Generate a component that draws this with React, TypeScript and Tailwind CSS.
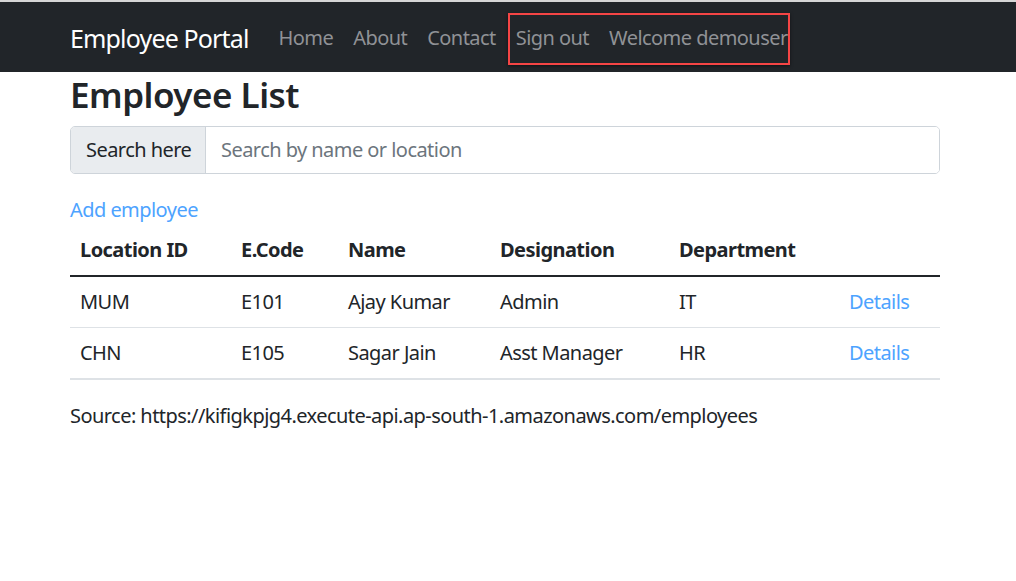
import React from "react";

const rows = [
  { loc: "MUM", code: "E101", name: "Ajay Kumar", des: "Admin", dept: "IT" },
  { loc: "CHN", code: "E105", name: "Sagar Jain", des: "Asst Manager", dept: "HR" },
];

export default function App() {
  return (
    <div
      className="min-h-[581px] w-[1016px] bg-white text-[#212529] tracking-[-0.55px]"
      style={{ fontFamily: '"Noto Sans", "Open Sans", Arial, sans-serif' }}
    >
      <div className="h-[2px] bg-[#d6d6d6]" />
      <nav className="relative h-[70px] bg-[#212529] flex items-center pl-[70px]">
        <span className="text-[25px] text-white mr-[20px] leading-none tracking-[-0.85px] pt-[2px]">Employee Portal</span>
        <div className="flex items-center text-[20px] text-[#909296] pt-[2px]">
          <span className="px-[10px]">Home</span>
          <span className="px-[10px]">About</span>
          <span className="px-[10px]">Contact</span>
          <span className="px-[10px]">Sign out</span>
          <span className="px-[10px]">Welcome demouser</span>
        </div>
        <div className="absolute left-[508px] top-[11px] w-[282px] h-[52px] border-2 border-[#f54545] shadow-[0_1px_3px_rgba(0,0,0,0.5)]" />
      </nav>
      <main className="w-[870px] ml-[70px]">
        <h3 className="mt-[2px] text-[35px] font-semibold leading-[42px] tracking-[-0.5px]">Employee List</h3>
        <div className="mt-[10px] flex h-[48px] rounded-[5px] border border-[#ced4da] overflow-hidden">
          <div className="w-[135px] shrink-0 bg-[#e9ecef] border-r border-[#ced4da] flex items-center pl-[15px] text-[20px] text-[#212529]">
            Search here
          </div>
          <input
            className="flex-1 px-[15px] text-[20px] outline-none placeholder:text-[#6c757d] bg-white tracking-[-0.55px]"
            placeholder="Search by name or location"
          />
        </div>
        <div className="mt-[21px] h-[30px] leading-[30px] text-[20px] text-[#4da3ff]">Add employee</div>
        <table className="w-full border-collapse text-[20px] leading-[30px] table-fixed">
          <colgroup>
            <col className="w-[161px]" />
            <col className="w-[107px]" />
            <col className="w-[152px]" />
            <col className="w-[179px]" />
            <col className="w-[170px]" />
            <col />
          </colgroup>
          <thead>
            <tr className="border-b-2 border-[#212529]">
              <th className="text-left font-bold px-[10px] py-[10px]">Location ID</th>
              <th className="text-left font-bold px-[10px] py-[10px]">E.Code</th>
              <th className="text-left font-bold px-[10px] py-[10px]">Name</th>
              <th className="text-left font-bold px-[10px] py-[10px]">Designation</th>
              <th className="text-left font-bold px-[10px] py-[10px]">Department</th>
              <th className="px-[10px] py-[10px]" />
            </tr>
          </thead>
          <tbody>
            {rows.map((r, i) => (
              <tr
                key={r.code}
                className={i === rows.length - 1 ? "border-b-2 border-[#dee2e6]" : "border-b border-[#dee2e6]"}
              >
                <td className="px-[10px] py-[10px]">{r.loc}</td>
                <td className="px-[10px] py-[10px]">{r.code}</td>
                <td className="px-[10px] py-[10px]">{r.name}</td>
                <td className="px-[10px] py-[10px]">{r.des}</td>
                <td className="px-[10px] py-[10px]">{r.dept}</td>
                <td className="px-[10px] py-[10px] text-[#4da3ff]">Details</td>
              </tr>
            ))}
          </tbody>
        </table>
        <p className="mt-[21px] text-[20px] leading-[30px]">
          Source: https://kifigkpjg4.execute-api.ap-south-1.amazonaws.com/employees
        </p>
      </main>
    </div>
  );
}
